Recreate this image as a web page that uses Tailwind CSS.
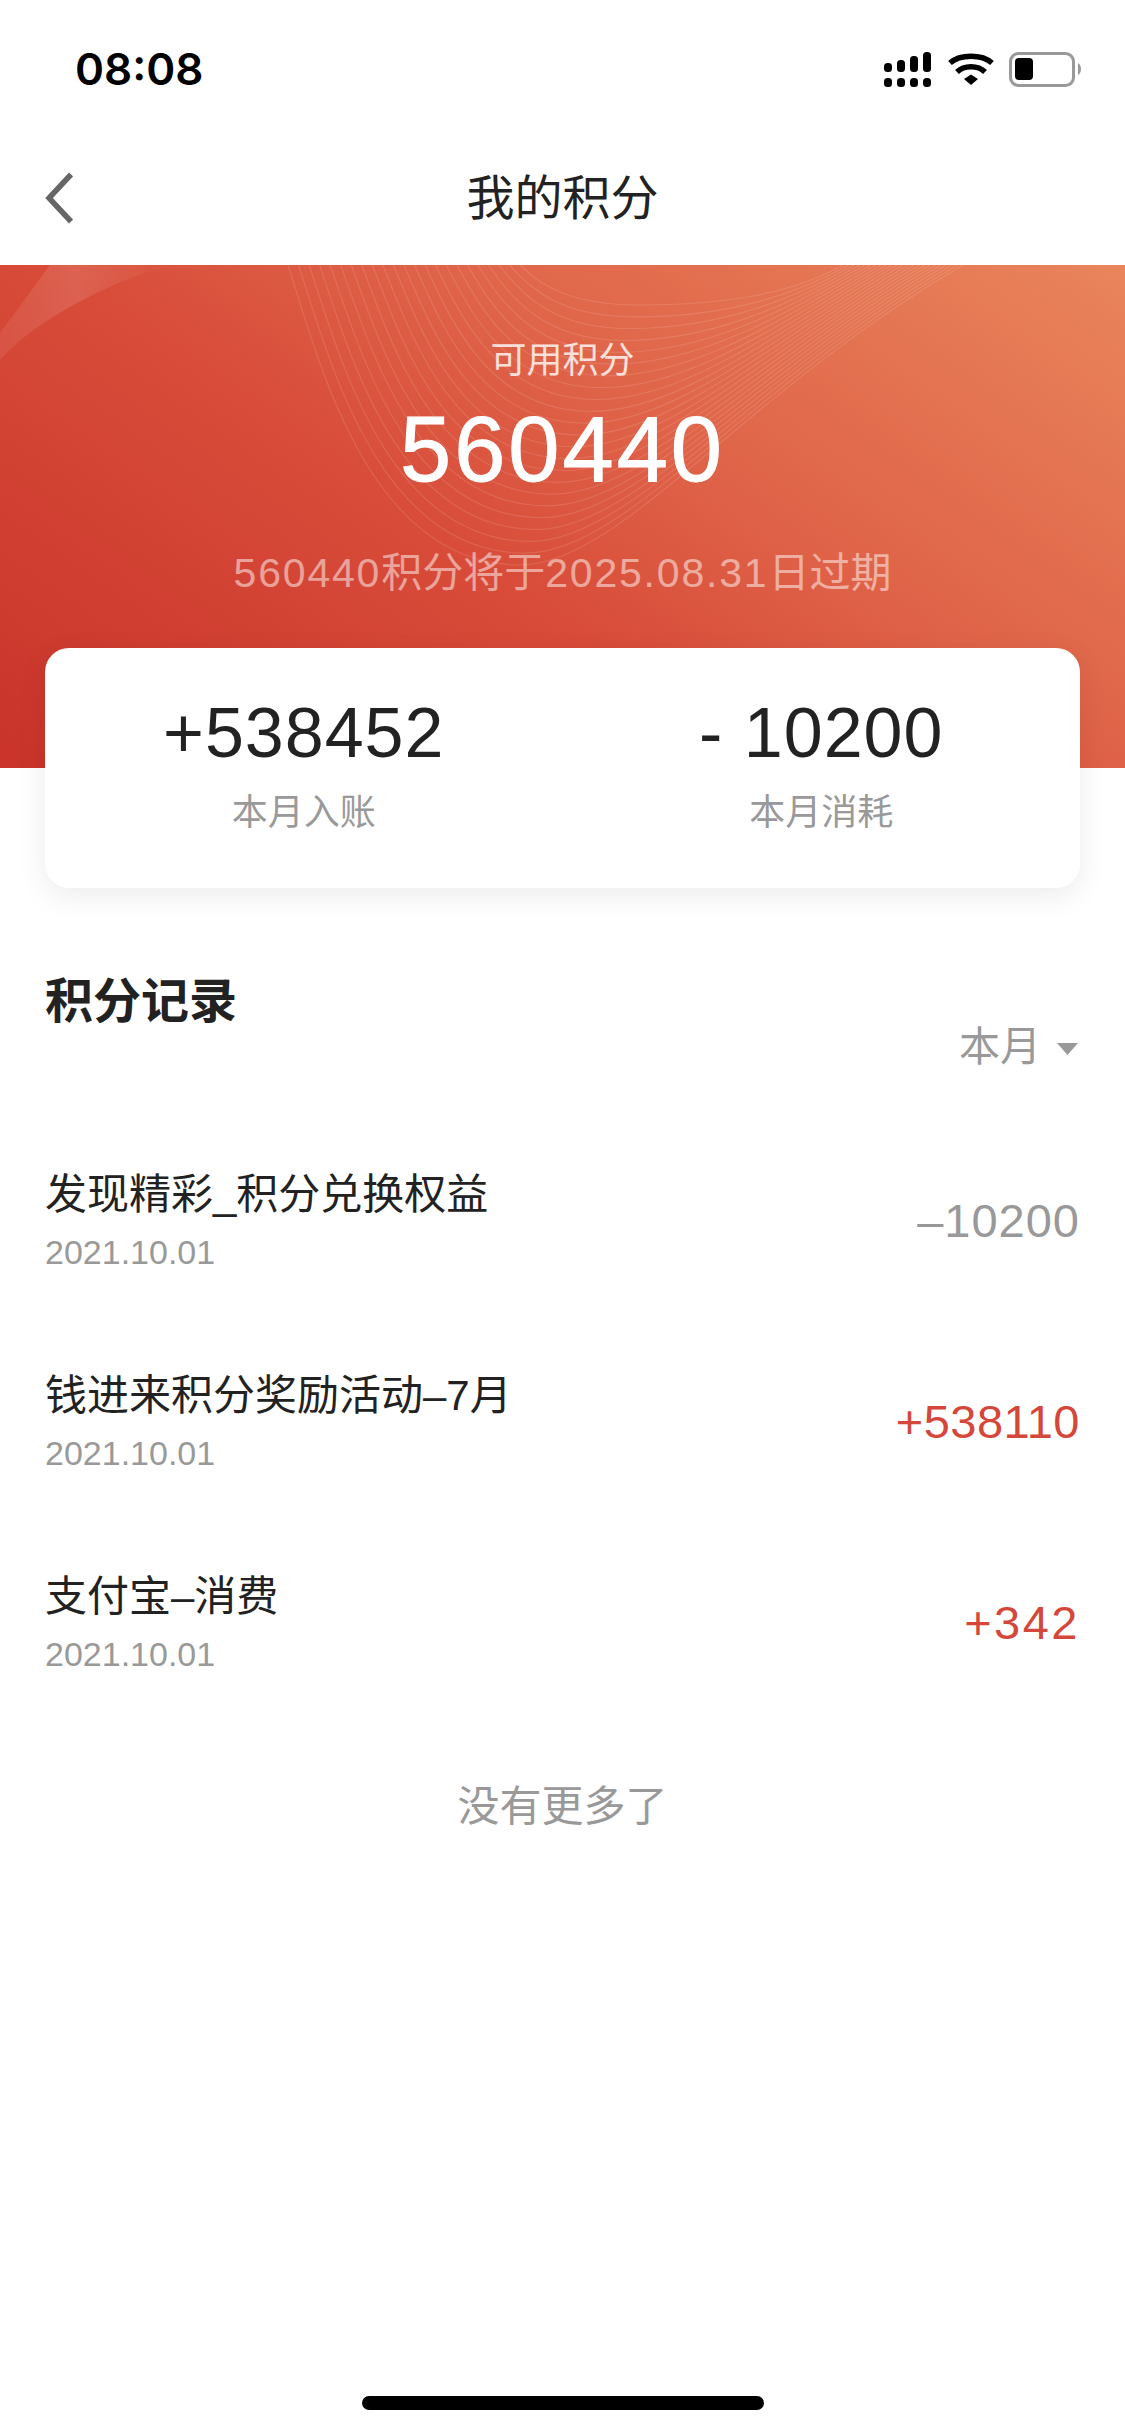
<!doctype html>
<html lang="zh-CN">
<head>
<meta charset="utf-8">
<script src="https://cdn.jsdelivr.net/npm/@tailwindcss/browser@4"></script>
</head>
<body class="m-0 bg-white">
<div class="relative w-[1125px] h-[2436px] overflow-hidden bg-white font-['Liberation_Sans','Noto_Sans_CJK_SC',sans-serif] text-[#222]">
  <div class="flex h-[132px] items-center justify-between pl-[75px] pr-[41px]">
    <span class="mt-[5px] font-['Inter',sans-serif] text-[44px] font-semibold leading-none text-black">08:08</span>
    <svg class="mt-[8px]" width="200" height="36" viewBox="0 0 200 36">
      <g fill="#000">
        <rect x="0" y="11" width="8" height="9" rx="3.5"/><rect x="13" y="8" width="8" height="12" rx="3.5"/><rect x="26" y="4" width="8" height="16" rx="3.5"/><rect x="39" y="0" width="8" height="20" rx="3.5"/>
        <rect x="0" y="26" width="8" height="9" rx="3.5"/><rect x="13" y="26" width="8" height="9" rx="3.5"/><rect x="26" y="26" width="8" height="9" rx="3.5"/><rect x="39" y="26" width="8" height="9" rx="3.5"/>
      </g>
      <g fill="none" stroke="#000" stroke-width="5.5"><path d="M66 11C76 2 98 2 108 11"/><path d="M73 20C80 13 94 13 101 20"/></g>
      <path d="M80 27L87 22.500L94 27L87 33Z" fill="#000"/>
      <rect x="126.500" y="1.500" width="63" height="32" rx="8" fill="none" stroke="#999" stroke-width="3"/>
      <rect x="131" y="6" width="18" height="22" rx="4" fill="#000"/>
      <path d="M194 11C198 13 198 21 194 23Z" fill="#999"/>
    </svg>
  </div>
  <div class="relative flex h-[133px] items-center justify-center">
    <svg class="absolute left-[43px] top-[40px]" width="30" height="52" viewBox="0 0 30 52"><path d="M28 2.500L6 26L28 49.500" fill="none" stroke="#666" stroke-width="5.500"/></svg>
    <h1 class="text-[48px] font-normal leading-none text-[#222]">我的积分</h1>
  </div>
  <section class="relative h-[503px] bg-[linear-gradient(35deg,#c9332a_0%,#d84c39_42%,#df6348_62%,#e9855c_100%)]">
    <svg class="absolute inset-0" width="1125" height="503" viewBox="0 0 1125 503" fill="none">
      <defs>
        <linearGradient id="ribbon" x1="0" y1="0" x2="1" y2="0"><stop offset="0" stop-color="#fff" stop-opacity=".07"/><stop offset=".45" stop-color="#fff" stop-opacity=".12"/><stop offset="1" stop-color="#fff" stop-opacity="0"/></linearGradient>
      </defs>
      <path d="M0 68L50 0L170 0C100 20 30 60 0 95Z" fill="url(#ribbon)"/>
      <g id="waves" stroke="#fff" stroke-opacity=".12" stroke-width="1.200"></g>
    </svg>
    <script>
      (function () {
        var g = document.getElementById('waves'), out = '';
        for (var k = 0; k <= 22; k++) {
          var t = k / 22, f = function (a, b) { return (a + (b - a) * t).toFixed(1); };
          out += '<path d="M' + f(288, 520) + ' 0C' + f(320, 540) + ' ' + f(100, 20) + ' ' + f(370, 570) + ' ' + f(300, 40) + ' ' + f(520, 640) + ' ' + f(300, 40) +
                 'C' + f(620, 720) + ' ' + f(300, 40) + ' ' + f(740, 790) + ' ' + f(130, 30) + ' ' + f(963, 843) + ' 0"/>';
        }
        g.innerHTML = out;
      })();
    </script>
    <div class="relative flex flex-col items-center">
      <p class="mt-[76px] text-[36px] leading-[40px] text-white/80">可用积分</p>
      <p class="mt-[18px] text-[92px] leading-[100px] tracking-[3px] text-white [-webkit-text-stroke:1px_white]">560440</p>
      <p class="mt-[50px] text-[41px] leading-[48px] text-white/50"><span class="tracking-[1.8px]">560440</span>积分将于<span class="tracking-[1.8px]">2025.08.31</span>日过期</p>
    </div>
  </section>
  <section class="relative z-10 mx-[45px] mt-[-120px] flex h-[240px] rounded-[24px] bg-white shadow-[0_8px_30px_rgba(0,0,0,0.08)]">
    <div class="flex flex-1 flex-col items-center pt-[50px]">
      <p class="text-[70px] leading-[70px] tracking-[1px] text-[#222]">+538452</p>
      <p class="mt-[25px] text-[36px] leading-[40px] text-[#999]">本月入账</p>
    </div>
    <div class="flex flex-1 flex-col items-center pt-[50px]">
      <p class="text-[70px] leading-[70px] tracking-[1px] text-[#222]">- 10200</p>
      <p class="mt-[25px] text-[36px] leading-[40px] text-[#999]">本月消耗</p>
    </div>
  </section>
  <section class="px-[45px]">
    <h2 class="mt-[86px] text-[48px] font-bold leading-[56px] text-[#222]">积分记录</h2>
    <div class="mt-[-5px] flex items-center justify-end gap-[16px] pr-[2px] text-[41px] leading-[44px] text-[#999]">
      <span>本月</span>
      <svg class="mt-[3px]" width="21" height="12" viewBox="0 0 21 12"><path d="M0 0H21L10.500 12Z" fill="#999"/></svg>
    </div>
    <ul class="mt-[92px] flex flex-col gap-[81px]">
      <li class="flex h-[120px] items-center justify-between">
        <div><p class="text-[42px] leading-[50px] text-[#222]">发现精彩_积分兑换权益</p><p class="mt-[12px] text-[34px] leading-[40px] text-[#999]">2021.10.01</p></div>
        <span class="text-[47px] leading-[50px] tracking-[1px] text-[#999]">–10200</span>
      </li>
      <li class="flex h-[120px] items-center justify-between">
        <div><p class="text-[42px] leading-[50px] text-[#222]">钱进来积分奖励活动–7月</p><p class="mt-[12px] text-[34px] leading-[40px] text-[#999]">2021.10.01</p></div>
        <span class="text-[47px] leading-[50px] tracking-[0.5px] text-[#d5473b]">+538110</span>
      </li>
      <li class="flex h-[120px] items-center justify-between">
        <div><p class="text-[42px] leading-[50px] text-[#222]">支付宝–消费</p><p class="mt-[12px] text-[34px] leading-[40px] text-[#999]">2021.10.01</p></div>
        <span class="text-[47px] leading-[50px] tracking-[2.5px] text-[#d5473b]">+342</span>
      </li>
    </ul>
    <p class="mt-[99px] text-center text-[42px] leading-[50px] text-[#999]">没有更多了</p>
  </section>
  <div class="absolute bottom-[26px] left-[362px] h-[14px] w-[402px] rounded-full bg-black"></div>
</div>
</body>
</html>
